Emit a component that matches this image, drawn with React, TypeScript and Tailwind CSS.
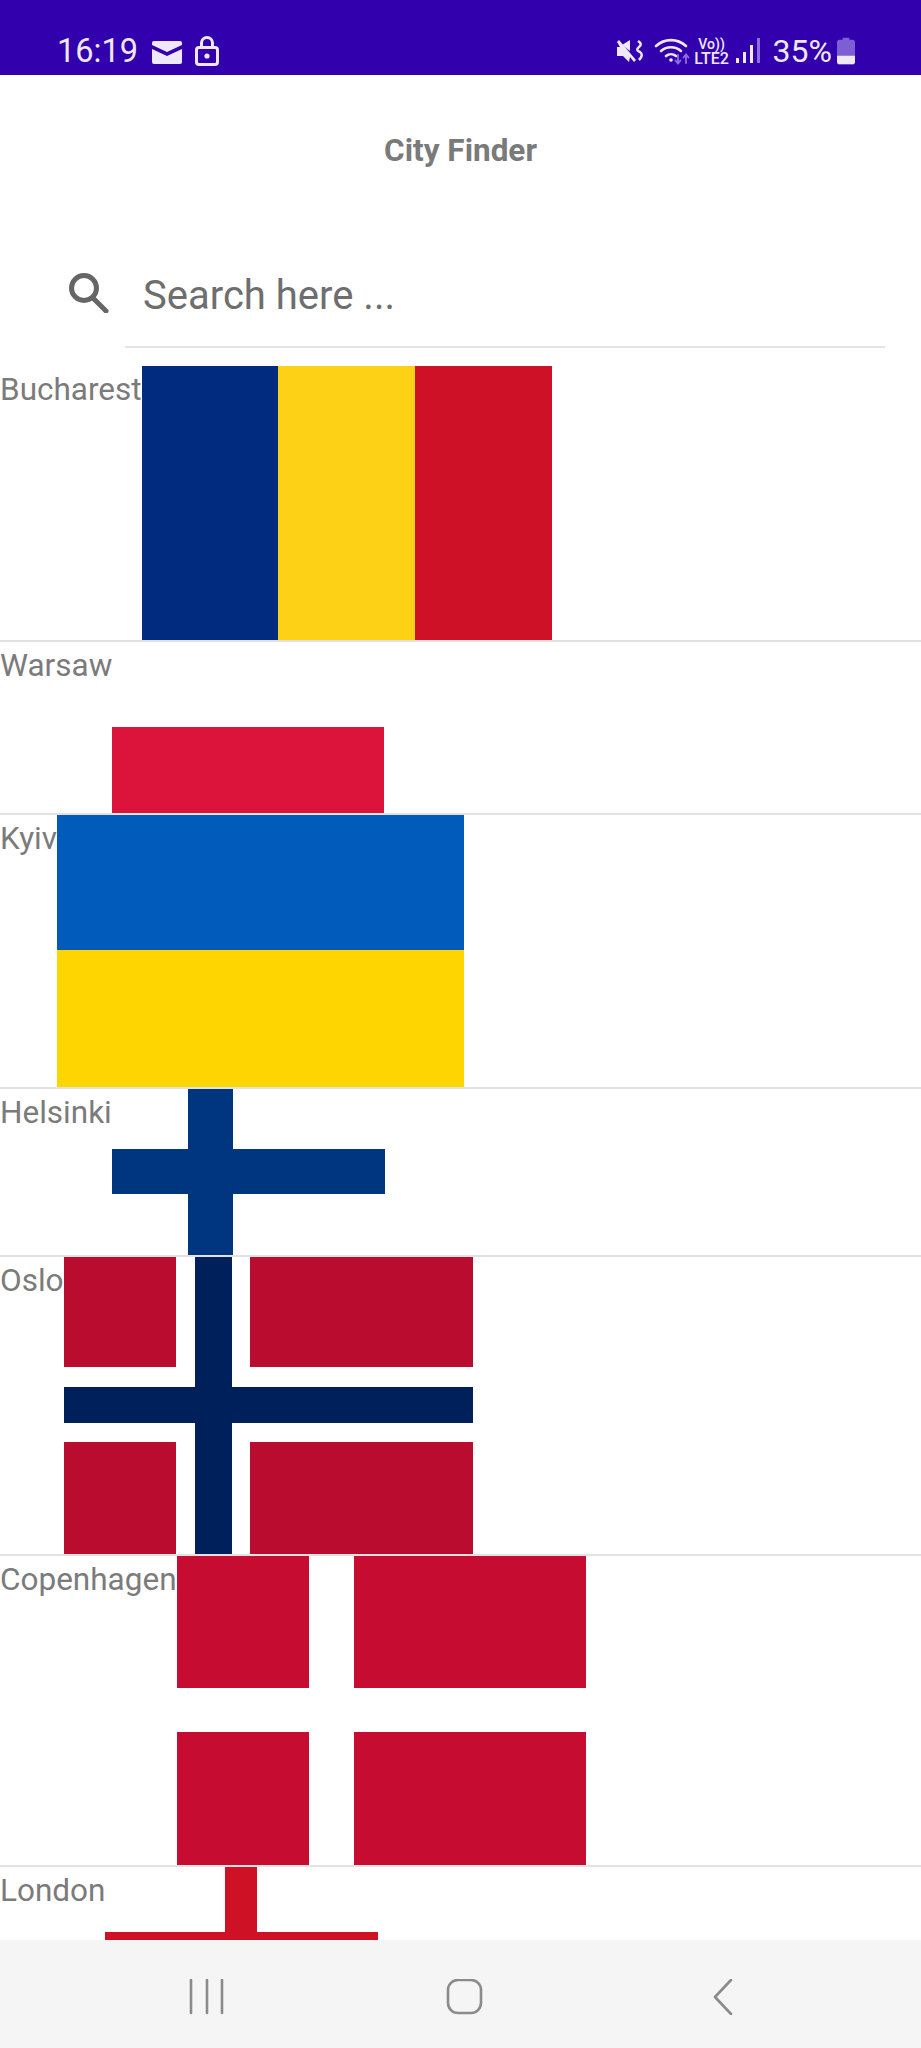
import React from 'react';

const StatusBar = () => (
  <div className="flex h-[75px] shrink-0 items-end justify-between bg-[#3300ad] pb-[8px] pl-[57px] pr-[66px] text-[#efe8fb]">
    <div className="flex items-center">
      <span className="text-[32.5px] leading-[32px] font-['Roboto',sans-serif]">16:19</span>
      <svg width="30" height="23" viewBox="0 0 30 23" className="ml-[14px] mt-[2px]">
        <path d="M2 0h26a2 2 0 0 1 2 2v2L15 11 0 4V2a2 2 0 0 1 2-2z" fill="#efe8fb" />
        <path d="M0 8l15 7 15-7v13a2 2 0 0 1-2 2H2a2 2 0 0 1-2-2z" fill="#efe8fb" />
      </svg>
      <svg width="24" height="30" viewBox="0 0 24 30" className="ml-[13px]" fill="none" stroke="#efe8fb" strokeWidth="3">
        <rect x="1.5" y="11.5" width="21" height="17" rx="2.5" />
        <path d="M6.5 11V7a5.5 5.5 0 0 1 11 0v4" />
        <circle cx="12" cy="20" r="2.6" fill="#efe8fb" stroke="none" />
      </svg>
    </div>
    <div className="flex items-center">
      <svg width="27" height="24" viewBox="0 0 27 24" fill="#efe8fb">
        <path d="M0 3l2-2 17 20-2 2-4-5-1 5-6-6H0V8h3z" />
        <path d="M5 6l8-5v11z" />
        <path d="M21 2q5 3 1 6t1 5q4 3-1 8" fill="none" stroke="#efe8fb" strokeWidth="2.500" />
      </svg>
      <svg width="36" height="28" viewBox="0 0 36 28" className="ml-[10px]" fill="none" stroke="#efe8fb" strokeWidth="2.6" strokeLinecap="round">
        <path d="M2 9a22 22 0 0 1 30 0" />
        <path d="M7 14a15 15 0 0 1 20 0" />
        <path d="M12 19a8 8 0 0 1 10 0" />
        <circle cx="17" cy="23" r="1.8" fill="#efe8fb" stroke="none" />
        <path d="M24 18v8M21.500 23.500l2.500 3 2.500-3" stroke="#8f6fe0" strokeWidth="1.800" />
        <path d="M32 26v-8M29.500 20.500l2.500-3 2.500 3" stroke="#8f6fe0" strokeWidth="1.800" />
      </svg>
      <div className="ml-[4px] flex w-[36px] flex-col items-center font-['Roboto',sans-serif] font-medium">
        <span className="h-[13px] text-[14px] leading-[13px]">Vo))</span>
        <span className="h-[14px] text-[16px] leading-[15px]">LTE2</span>
      </div>
      <svg width="25" height="26" viewBox="0 0 25 26" className="ml-[6px]" fill="#efe8fb">
        <rect x="0" y="20" width="3" height="5" />
        <rect x="7" y="14" width="3" height="11" />
        <rect x="14" y="7" width="3" height="18" />
        <rect x="21" y="0" width="3" height="25" fill="#8f6fe0" />
      </svg>
      <span className="ml-[12px] text-[32px] leading-[32px] font-['Roboto',sans-serif]">35%</span>
      <svg width="18" height="28" viewBox="0 0 19 28" className="ml-[5px]">
        <path d="M6 0h7v2h3a3 3 0 0 1 3 3v20a3 3 0 0 1-3 3H3a3 3 0 0 1-3-3V5a3 3 0 0 1 3-3h3z" fill="#7d5fd3" />
        <path d="M0 19h19v6a3 3 0 0 1-3 3H3a3 3 0 0 1-3-3z" fill="#efe8fb" />
      </svg>
    </div>
  </div>
);

const Romania = () => (
  <svg width="410" height="274" className="block shrink-0">
    <rect x="0" width="137" height="274" fill="#002b7f" />
    <rect x="136" width="137" height="274" fill="#fcd116" />
    <rect x="273" width="137" height="274" fill="#ce1126" />
  </svg>
);

const Poland = () => (
  <svg width="272" height="171" className="block shrink-0">
    <rect y="85" width="272" height="86" fill="#dc143c" />
  </svg>
);

const Ukraine = () => (
  <svg width="407" height="272" className="block shrink-0">
    <rect width="407" height="135" fill="#005bbb" />
    <rect y="135" width="407" height="137" fill="#ffd500" />
  </svg>
);

const Finland = () => (
  <svg width="273" height="166" className="block shrink-0">
    <rect x="76" width="45" height="166" fill="#003580" />
    <rect y="60" width="273" height="45" fill="#003580" />
  </svg>
);

const Norway = () => (
  <svg width="409" height="297" className="block shrink-0">
    <rect width="409" height="297" fill="#ba0c2f" />
    <rect x="112" width="74" height="297" fill="#fff" />
    <rect y="110" width="409" height="75" fill="#fff" />
    <rect x="131" width="37" height="297" fill="#00205b" />
    <rect y="130" width="409" height="36" fill="#00205b" />
  </svg>
);

const Denmark = () => (
  <svg width="409" height="309" className="block shrink-0">
    <rect width="409" height="309" fill="#c60c30" />
    <rect x="132" width="45" height="309" fill="#fff" />
    <rect y="132" width="409" height="44" fill="#fff" />
  </svg>
);

const England = () => (
  <svg width="273" height="182" className="block shrink-0">
    <rect x="120" width="32" height="182" fill="#ce1124" />
    <rect y="65" width="273" height="32" fill="#ce1124" />
  </svg>
);

const cities = [
  { name: 'Bucharest', flag: <Romania /> },
  { name: 'Warsaw', flag: <Poland /> },
  { name: 'Kyiv', flag: <Ukraine /> },
  { name: 'Helsinki', flag: <Finland /> },
  { name: 'Oslo', flag: <Norway /> },
  { name: 'Copenhagen', flag: <Denmark /> },
  { name: 'London', flag: <England /> },
];

const NavBar = () => (
  <div className="flex h-[108px] shrink-0 items-start bg-[#f5f5f5] pt-[39px]">
    <svg width="921" height="36" viewBox="0 0 921 36" fill="none" stroke="#8b8b8b" strokeWidth="2.6" strokeLinecap="round" strokeLinejoin="round">
      <path d="M191 1v33M207 1v33M222 1v33" />
      <rect x="448" y="1" width="33" height="33" rx="10" />
      <path d="M731 1l-16 17 16 17" />
    </svg>
  </div>
);

export default function App() {
  return (
    <div className="flex h-[2048px] w-[921px] flex-col overflow-hidden bg-white font-['Roboto',sans-serif]">
      <StatusBar />
      <div className="flex h-[150px] shrink-0 justify-center pt-[58px]">
        <h1 className="text-[31.5px] leading-[36px] font-bold text-[#7a7a7a]">City Finder</h1>
      </div>
      <div className="flex h-[123px] shrink-0 items-start">
        <div className="ml-[68px] mt-[48px] h-[40px] w-[42px]">
          <svg width="42" height="40" viewBox="0 0 42 40" fill="none" stroke="#666666" strokeWidth="5" strokeLinecap="round">
            <circle cx="16" cy="15" r="12.500" />
            <path d="M25 25l13 13" />
          </svg>
        </div>
        <div className="ml-[15px] mr-[36px] h-[123px] flex-1">
          <div className="h-[123px] w-full border-b-2 border-[#e4e4e4] pt-[48px]">
            <input
              placeholder="Search here ..."
              className="ml-[18px] w-[700px] bg-transparent text-[40px] leading-[46px] text-[#6e6e6e] placeholder:text-[#6e6e6e] outline-none"
            />
          </div>
        </div>
      </div>
      <div className="mt-[18px] min-h-0 flex-1 overflow-hidden">
        {cities.map((city) => (
          <div key={city.name} className="flex items-start border-b-2 border-[#e2e2e2]">
            <span className="text-[31.5px] leading-[47px] text-[#7b7b7b]">{city.name}</span>
            {city.flag}
          </div>
        ))}
      </div>
      <NavBar />
    </div>
  );
}
